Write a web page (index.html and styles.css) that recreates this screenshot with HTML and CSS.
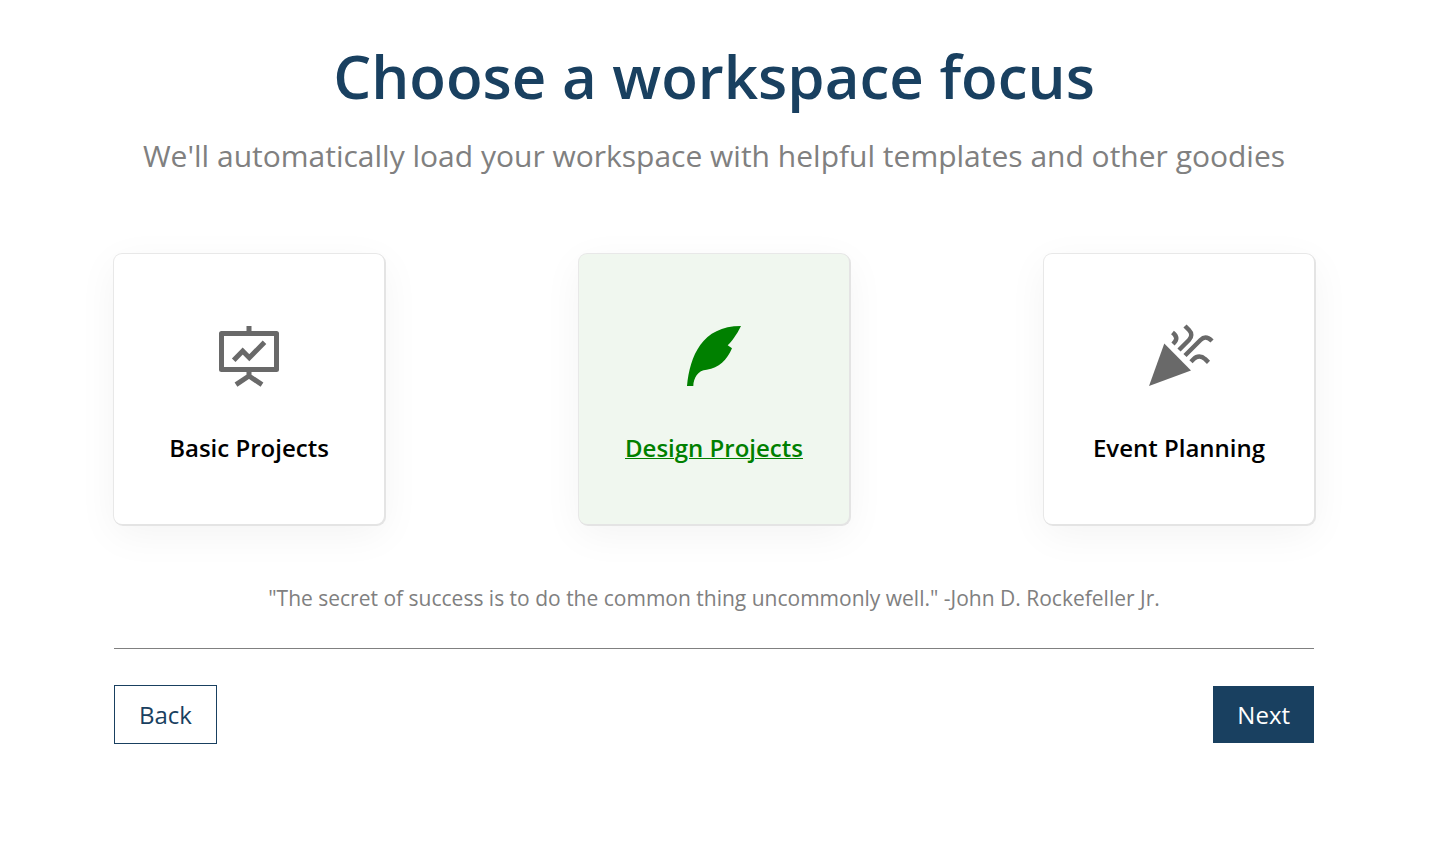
FILE: index.html
```html
<!DOCTYPE html>
<html lang="en">
<head>
<meta charset="utf-8">
<title>Choose a workspace focus</title>
<link rel="stylesheet" href="styles.css">
</head>
<body>
<main class="page">
  <header class="intro">
    <h1 class="title">Choose a workspace focus</h1>
    <p class="subtitle">We'll automatically load your workspace with helpful templates and other goodies</p>
  </header>
  <div class="cards">
    <button type="button" class="card">
      <svg class="icon" viewBox="0 0 72 72" fill="none" stroke="currentColor" stroke-width="5" aria-hidden="true"><rect x="8.500" y="13.500" width="55" height="36" stroke-linejoin="round"/><path d="M36 6v6M36 50v6M23 64.700L36 56l13 8.700M20.700 40.300l9-9.300 6.600 6.700 15.200-15.400"/></svg>
      <span class="label">Basic Projects</span>
    </button>
    <button type="button" class="card selected" aria-pressed="true">
      <svg class="icon" viewBox="0 0 72 72" fill="currentColor" aria-hidden="true"><path d="M9 66C12 36 24 6 63 6C58 16 54 21 49.700 25.300L54 28.300C49 40 41 48 28.700 49.700C20 50 15.500 58 15.300 66z"/></svg>
      <span class="label">Design Projects</span>
    </button>
    <button type="button" class="card">
      <svg class="icon" viewBox="0 0 72 72" fill="none" stroke="currentColor" stroke-width="4.500" aria-hidden="true"><path d="M6 66L21.300 23.500L48 50.500z" fill="currentColor" stroke="none"/><path d="M29.500 12.500C34.500 16.500 34.500 19.500 30 24M42 6L46 10C49 13 49 17 46 20L36 30M42 35.500L57.500 20C61 16.500 64.500 16.500 69 21M48 41.800L50.700 39C54 35.500 58.500 35.500 62 39L65.500 42.300"/></svg>
      <span class="label">Event Planning</span>
    </button>
  </div>
  <p class="quote">"The secret of success is to do the common thing uncommonly well." -John D. Rockefeller Jr.</p>
  <hr class="rule">
  <nav class="actions">
    <button type="button" class="btn">Back</button>
    <button type="button" class="btn primary">Next</button>
  </nav>
</main>
</body>
</html>
```
FILE: styles.css
```css
* { box-sizing: border-box; }
body { margin: 0; padding-right: 14px; background: #fff; font-family: "Open Sans", sans-serif; }
.page { max-width: 1200px; margin: 0 auto; padding-top: 35px; }
.title { margin: 0; font-size: 60px; line-height: 82px; font-weight: 600; color: #194060; text-align: center; }
.subtitle { margin: 18px 0 0; font-size: 30px; line-height: 42px; color: #808080; text-align: center; }
.cards { display: flex; justify-content: space-between; margin-top: 77px; }
.card { width: 270px; height: 270px; padding: 6px 0 0; display: flex; flex-direction: column; align-items: center; justify-content: center; gap: 39px; border: 0; border-radius: 8px; background: #fff; font-family: inherit; color: #696969; box-shadow: 1px 1px 0 1px #e4e4e4, 0 0 0 1px #e8e8e8, 0 10px 40px rgba(0, 0, 0, .05); }
.icon { width: 72px; height: 72px; }
.label { font-size: 24px; line-height: 33px; font-weight: 600; color: #000; }
.selected { background: #f0f7ef; color: #008000; }
.selected .label { color: #008000; text-decoration: underline; text-decoration-thickness: 1px; }
.quote { margin: 57px 0 0; font-size: 21px; line-height: 34px; color: #808080; text-align: center; }
.rule { margin: 33px 0 36px; border: 0; border-top: 1px solid #808080; }
.actions { display: flex; justify-content: space-between; align-items: center; }
.btn { padding: 12px 24px; border: 1px solid #194060; background: #fff; color: #194060; font-family: "Open Sans", sans-serif; font-size: 24px; line-height: 33px; font-weight: 500; }
.primary { border: 0; background: #194060; color: #fff; }
```
